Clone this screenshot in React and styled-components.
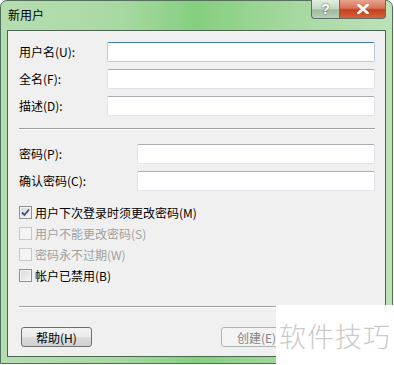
import React from 'react'
import styled, { createGlobalStyle } from 'styled-components'

const GlobalStyle = createGlobalStyle`
  body {
    margin: 0;
    background: #ffffff;
    font-family: "Noto Sans CJK SC", "Liberation Sans", sans-serif;
    font-size: 12px;
    color: #000;
  }
`

function Checkbox({ checked, disabled }) {
  return (
    <Box disabled={disabled}>
      {checked && (
        <svg width="9" height="9" viewBox="0 0 9 9">
          <path d="M1 4.5 L3.5 7 L8 1.5" fill="none" stroke="#3a4f7a" strokeWidth="1.8" />
        </svg>
      )}
    </Box>
  )
}

function App() {
  return (
    <>
      <GlobalStyle />
      <Window>
        <TitleBar>
          <Title>新用户</Title>
          <Caption>
            <HelpButton>?</HelpButton>
            <CloseButton>
              <svg width="12" height="10" viewBox="0 0 12 10">
                <path d="M1.5 1 L10.5 9 M10.5 1 L1.5 9" stroke="#fff" strokeWidth="2.6" strokeLinecap="square" />
              </svg>
            </CloseButton>
          </Caption>
        </TitleBar>
        <Client>
          <Fields labelWidth={88}>
            <Label>用户名(U):</Label>
            <Input focused />
            <Label>全名(F):</Label>
            <Input />
            <Label>描述(D):</Label>
            <Input />
          </Fields>
          <Rule top={12} />
          <Fields labelWidth={118} top={14}>
            <Label>密码(P):</Label>
            <Input />
            <Label>确认密码(C):</Label>
            <Input />
          </Fields>
          <Checks>
            <CheckRow><Checkbox checked /><span>用户下次登录时须更改密码(M)</span></CheckRow>
            <CheckRow disabled><Checkbox disabled /><span>用户不能更改密码(S)</span></CheckRow>
            <CheckRow disabled><Checkbox disabled /><span>密码永不过期(W)</span></CheckRow>
            <CheckRow><Checkbox /><span>帐户已禁用(B)</span></CheckRow>
          </Checks>
          <Rule top={20} />
          <Buttons>
            <Button>帮助(H)</Button>
            <Button disabled>创建(E)</Button>
          </Buttons>
        </Client>
      </Window>
      <Watermark>软件技巧</Watermark>
    </>
  )
}

export default App

const Window = styled.div`
  width: 393px;
  height: 364px;
  border: 1px solid #55705a;
  border-radius: 7px 7px 0 0;
  background: linear-gradient(90deg, #b6ddb1 0%, #a9d9a3 30%, #85cf7f 50%, #a6d8a0 75%, #bde2b8 100%);
  display: flex;
  flex-direction: column;
  padding: 0 6px 6px 6px;
  box-sizing: border-box;
`

const TitleBar = styled.div`
  height: 29px;
  display: flex;
  justify-content: space-between;
  align-items: flex-start;
`

const Title = styled.div`
  padding: 6px 0 0 1px;
  font-size: 12px;
  line-height: 16px;
`

const Caption = styled.div`
  display: flex;
  margin-top: -1px;
`

const CaptionButton = styled.div`
  height: 19px;
  display: flex;
  align-items: center;
  justify-content: center;
  border: 1px solid #5d6f62;
  border-top: none;
  box-sizing: border-box;
`

const HelpButton = styled(CaptionButton)`
  width: 28px;
  border-right: none;
  border-radius: 0 0 0 4px;
  background: linear-gradient(#e2efe0, #c2d6c0 50%, #9fb9a0 55%, #b9d0b8);
  color: #fff;
  font-family: "Liberation Sans", sans-serif;
  font-weight: bold;
  font-size: 14px;
  text-shadow: 0 0 2px #3c4c40;
`

const CloseButton = styled(CaptionButton)`
  width: 47px;
  border-radius: 0 0 4px 0;
  background: linear-gradient(#e8a48e, #d9735a 45%, #c4401f 55%, #d5633e);
`

const Client = styled.div`
  flex: 1;
  background: #f0f0f0;
  border: 1px solid #4b6650;
  padding: 11px 10px 0 11px;
  display: flex;
  flex-direction: column;
`

const Fields = styled.div`
  display: grid;
  grid-template-columns: ${p => p.labelWidth}px 1fr;
  row-gap: 7px;
  align-items: center;
  margin-top: ${p => p.top || 0}px;
`

const Label = styled.div`
  font-size: 12px;
  line-height: 20px;
`

const Input = styled.div`
  height: 20px;
  box-sizing: border-box;
  background: #fff;
  border: 1px solid ${p => (p.focused ? '#b6cee4' : '#e2e3ea')};
  border-top-color: ${p => (p.focused ? '#3d7bad' : '#abadb3')};
  border-radius: 2px;
`

const Rule = styled.div`
  margin-top: ${p => p.top}px;
  height: 1px;
  background: #a0a0a0;
  border-bottom: 1px solid #ffffff;
`

const Checks = styled.div`
  margin-top: 11px;
  display: flex;
  flex-direction: column;
`

const CheckRow = styled.div`
  height: 21px;
  display: flex;
  align-items: center;
  gap: 3px;
  color: ${p => (p.disabled ? '#a0a0a0' : '#000')};
`

const Box = styled.div`
  width: 13px;
  height: 13px;
  box-sizing: border-box;
  border: 1px solid ${p => (p.disabled ? '#c8c8c8' : '#8e8f8f')};
  background: ${p => (p.disabled ? '#f4f4f4' : 'linear-gradient(135deg, #d8d8d8, #f6f6f6)')};
  display: flex;
  align-items: center;
  justify-content: center;
  box-shadow: inset 0 0 0 1px #f4f4f4;
`

const Buttons = styled.div`
  margin-top: 19px;
  padding-left: 2px;
  display: flex;
  gap: 129px;
`

const Button = styled.div`
  width: 71px;
  height: 20px;
  box-sizing: border-box;
  border: 1px solid ${p => (p.disabled ? '#adb2b5' : '#707070')};
  border-radius: 3px;
  background: ${p => (p.disabled ? '#f4f4f4' : 'linear-gradient(#f2f2f2 0%, #ebebeb 50%, #dddddd 51%, #cfcfcf 100%)')};
  color: ${p => (p.disabled ? '#838383' : '#000')};
  display: flex;
  align-items: center;
  justify-content: center;
  font-size: 12px;
`

const Watermark = styled.div`
  position: absolute;
  left: 276px;
  top: 305px;
  right: 0;
  height: 60px;
  background: #ffffff;
  color: #cacaca;
  font-size: 27px;
  font-weight: 300;
  letter-spacing: 1px;
  display: flex;
  align-items: center;
  padding-left: 3px;
  overflow: hidden;
`
